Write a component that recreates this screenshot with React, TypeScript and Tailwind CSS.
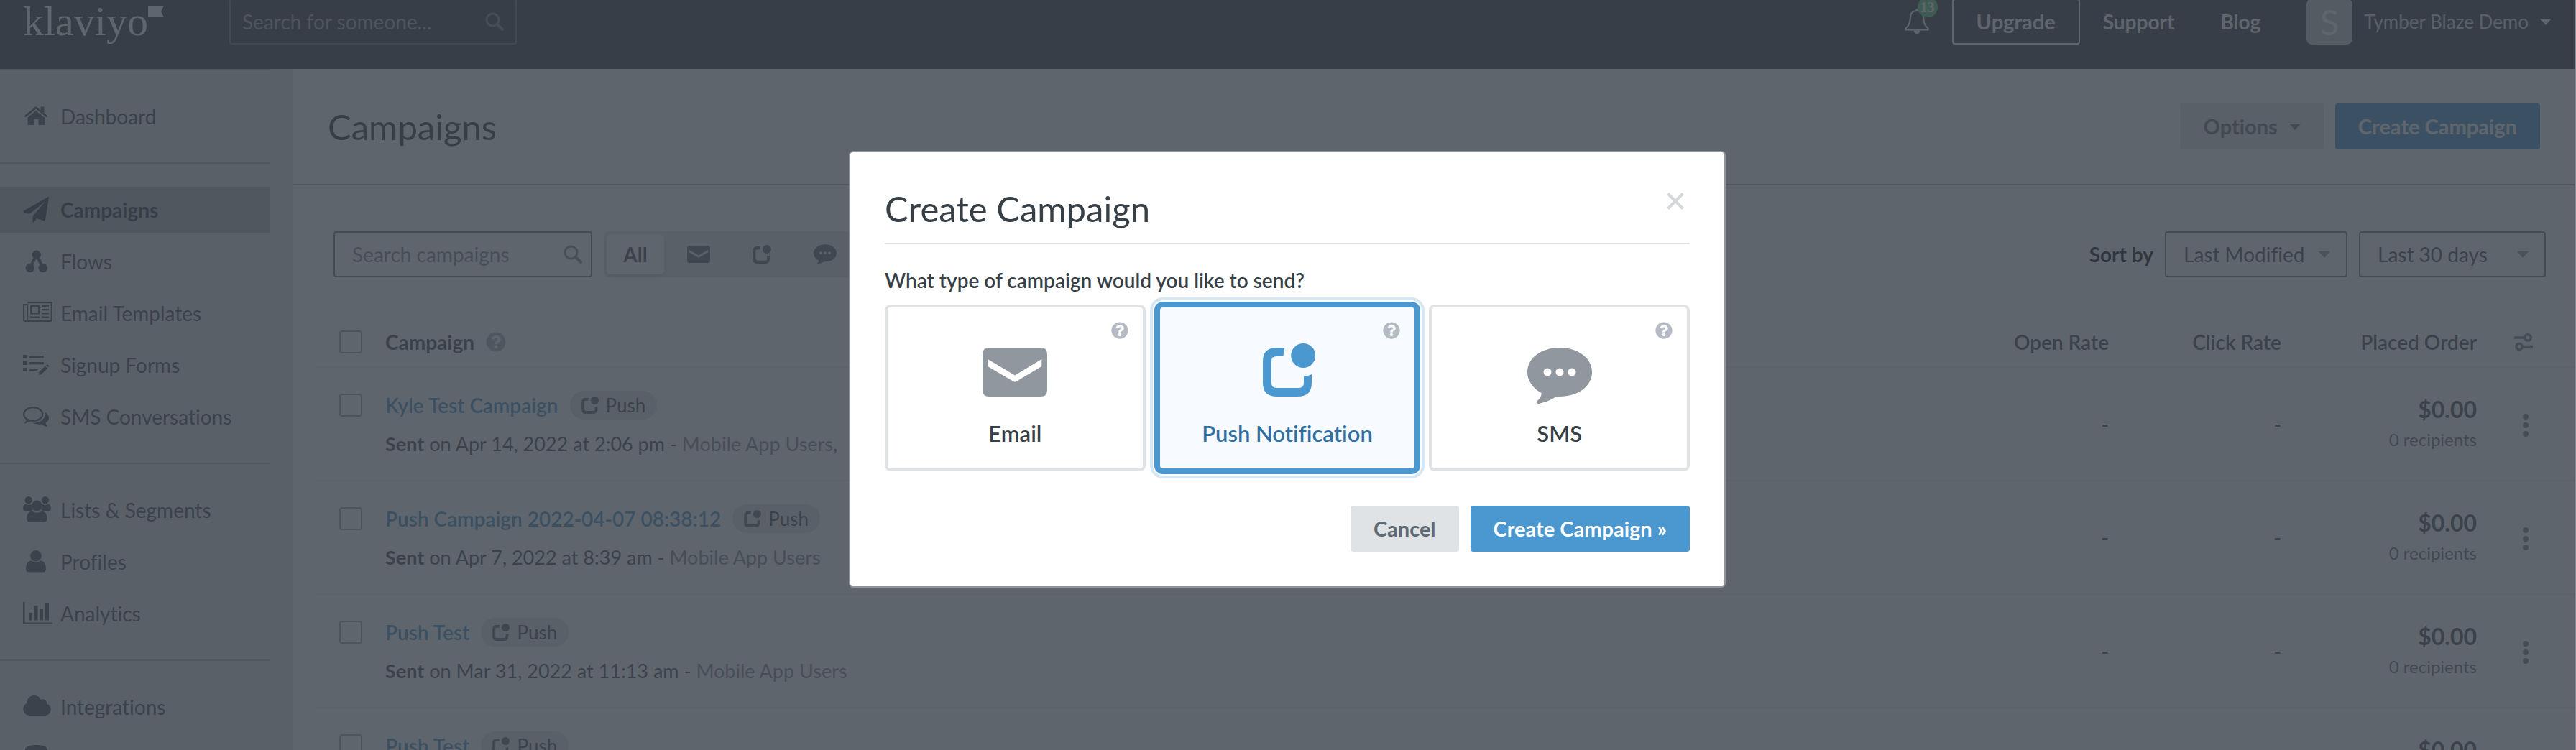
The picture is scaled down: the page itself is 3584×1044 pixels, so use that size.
import { useState } from "react"
import type { ReactNode } from "react"
import { FaQuestionCircle } from "react-icons/fa"
import clsx from "clsx"

/* Icons */

function NavIcon({ children }: { children: ReactNode }) {
  return (
    <svg viewBox="0 0 42 36" className="h-9 w-[42px] shrink-0 overflow-visible" fill="currentColor" aria-hidden="true">
      {children}
    </svg>
  )
}

const icons = {
  home: (
    <NavIcon>
      <g transform="translate(2 4)">
        <path d="M1.5 13.5 16 1.8l14.500 11.700" fill="none" stroke="currentColor" strokeWidth="2.800" strokeLinecap="round" strokeLinejoin="round" />
        <path d="M22.500 .5h5v9l-5-4z" />
        <path d="M16 6 28 15.500V25q0 1-1 1h-7.500v-8h-6v8H5.500q-1 0-1-1v-9.500z" />
      </g>
    </NavIcon>
  ),
  plane: (
    <NavIcon>
      <path d="M35 0 .6 19.800q-1 1 .4 1.800l7.500 2.700L31 6.500 13.500 27v8.200q.8 1.200 1.800 0L19 30l10.500 3.400q1.300.2 1.500-1L36 1q0-1.200-1-1z" />
    </NavIcon>
  ),
  flows: (
    <NavIcon>
      <g transform="translate(3.500 2.500)">
        <path d="M15.300 6.300 6.300 24.500M15.300 6.300l9 18.200" stroke="currentColor" strokeWidth="4.200" />
        <circle cx="15.300" cy="6.300" r="6.200" />
        <circle cx="6.300" cy="24.500" r="6.200" />
        <circle cx="24.300" cy="24.500" r="6.200" />
      </g>
    </NavIcon>
  ),
  news: (
    <NavIcon>
      <g transform="translate(0 2)" fill="none" stroke="currentColor" strokeWidth="2.200">
        <path d="M6.200 1.100h33.600v24q0 1.800-1.800 1.800H3q-1.900 0-1.900-1.800V4h5v21q0 1.500-1.800 1.900" />
        <path d="M11.200 6h11v10.500h-11zM10 21.500h13.200M26 6h10M26 11.200h10M26 16.400h10M26 21.500h10" />
      </g>
    </NavIcon>
  ),
  forms: (
    <NavIcon>
      <g transform="translate(0 4)">
        <path d="M0 0h5.500v5H0zM0 9h5.500v5H0zM0 18h5.500v5H0zM8.500 1H29v3.200H8.500zM8.500 10H29v3.200H8.500zM8.500 19H22l-3.200 3.200H8.500z" />
        <path d="m21.500 28 .8-4.300 8.600-8.200 3.300 3.300-8.500 8.200zM32 14.500l1.300-1.100q.8-.4 1.400.2l1.200 1.300q.5.700 0 1.400l-1 1.200z" />
      </g>
    </NavIcon>
  ),
  chat: (
    <NavIcon>
      <g transform="translate(0 4)">
        <path
          d="M14.200 1.200C7 1.200 1.200 5.400 1.200 10.600c0 3.300 2.100 5.900 5.300 7.500l-2.300 3.600 5.800-2.200c1.300.3 2.700.4 4.200.4 7.200 0 13-4.100 13-9.300s-5.800-9.400-13-9.400z"
          fill="none"
          stroke="currentColor"
          strokeWidth="2.300"
        />
        <path d="M30.800 8c3.200 1.900 5.200 4.500 5.200 7.600 0 2.900-1.600 5.300-4.300 6.800.3 2 1 3.300 1.800 4.300.4.800-.2 1.400-1 1.200-2.600-.6-5-1.900-6.500-3.300-4.900.6-9.800-.2-13-2 8.800.6 18.900-3.800 17.800-14.600z" />
      </g>
    </NavIcon>
  ),
  users: (
    <NavIcon>
      <g transform="translate(0 -1)">
        <circle cx="7.700" cy="5.200" r="5.200" />
        <circle cx="31" cy="5.200" r="5.200" />
        <path d="M4 10.500q4 2.500 7.800.3.200 5.500 2.200 8-2 .5-3.500 2H4.500Q0 20.500 0 16.500q.2-5 4-6zM35 10.500q-4 2.500-7.800.3-.2 5.500-2.200 8 2 .5 3.500 2h6Q39 20.500 39 16.500q-.2-5-4-6z" />
        <circle cx="19.400" cy="13" r="7.400" />
        <path d="M12.500 20.500q7 4.500 13.800 0Q33.500 21.500 33.500 31q0 5-5 5h-18q-5.200 0-5.200-5 0-9.500 7.200-10.500z" />
      </g>
    </NavIcon>
  ),
  user: (
    <NavIcon>
      <g transform="translate(4 2)">
        <circle cx="14" cy="7.800" r="7.800" />
        <path d="M7.200 14.200q6.800 4.500 13.600 0Q28 15.500 28 26q0 4.500-4.500 4.500h-19Q0 30.500 0 26q0-10.500 7.200-11.800z" />
      </g>
    </NavIcon>
  ),
  chart: (
    <NavIcon>
      <path d="M0 2h2.500v28.500H41V33H0zM8 17h5v10.500H8zM15.500 7h5v20.500h-5zM23 12h5v15.500h-5zM31 4h5v23.500h-5z" />
    </NavIcon>
  ),
  cloud: (
    <NavIcon>
      <path d="M9 30a9 9 0 0 1-3.500-17.200C5 6.500 10 2 15.500 2c4.500 0 8 2.500 9.500 6 4-2.500 9 1 8 5.800A8.300 8.300 0 0 1 31 30z" />
    </NavIcon>
  ),
  database: (
    <NavIcon>
      <path d="M3 5c0-8 31-8 31 0v6c0 8-31 8-31 0z" />
    </NavIcon>
  ),
}

function EmailIcon({ className }: { className?: string }) {
  return (
    <svg viewBox="0 0 90 68" className={className} aria-hidden="true">
      <path
        fill="currentColor"
        fillRule="evenodd"
        d="M9 0h72q9 0 9 9v50q0 9-9 9H9q-9 0-9-9V9q0-9 9-9zm-1.700 16v10L43 47q2 1 4 0l35.300-21V16L45 38.500z"
      />
    </svg>
  )
}

function PushIcon({ className }: { className?: string }) {
  return (
    <svg viewBox="0 0 73 74" className={className} fill="currentColor" aria-hidden="true">
      <path d="M30.600 6H20C6 6 0 12 0 26v28c0 14 6 20 20 20h28c14 0 20-6 20-20V43q-5 2.500-11 2.500V55q0 7-7 7H19q-7 0-7-7V24q0-6 7-6h9.500q0-6 2.100-12z" />
      <circle cx="56.200" cy="17" r="17" />
    </svg>
  )
}

function SmsIcon({ className }: { className?: string }) {
  return (
    <svg viewBox="0 0 90 78" className={className} aria-hidden="true">
      <path
        fill="currentColor"
        fillRule="evenodd"
        d="M45 0C20 0 0 14 0 34c0 12 8 23 19.600 29C19.600 68 17 71 13.500 74.500 12 77 14 78.500 17 77.700 27 75.500 34 72 40 68h5c25 0 45-14 45-34S70 0 45 0zM28 28.500a5.500 5.500 0 1 1 0 11 5.500 5.500 0 0 1 0-11zm17 0a5.500 5.500 0 1 1 0 11 5.500 5.500 0 0 1 0-11zm17 0a5.500 5.500 0 1 1 0 11 5.500 5.500 0 0 1 0-11z"
      />
    </svg>
  )
}

function SearchIcon() {
  return (
    <svg viewBox="0 0 26 26" className="size-[26px] shrink-0" fill="none" stroke="currentColor" aria-hidden="true">
      <circle cx="10.500" cy="10.500" r="8.500" strokeWidth="3.200" />
      <path d="m17 17 7 7" strokeWidth="4" strokeLinecap="round" />
    </svg>
  )
}

function BellIcon() {
  return (
    <svg viewBox="0 0 34 36" className="h-9 w-[34px]" fill="none" stroke="currentColor" strokeWidth="2.200" aria-hidden="true">
      <path d="M17 3c-6 0-9 3.500-9 9-.3 7-2 12-6.500 15.500v1.800h31v-1.800C28 24 26.300 19 26 12c0-5.500-3-9-9-9z" />
      <path d="M12.500 30.500q.5 4.500 4.500 4.500t4.500-4.500z" fill="currentColor" stroke="none" />
      <circle cx="17" cy="2" r="1.800" fill="currentColor" stroke="none" />
    </svg>
  )
}

function Caret({ className }: { className?: string }) {
  return (
    <svg viewBox="0 0 16 9" className={clsx("h-[9px] w-4 shrink-0", className)} fill="currentColor" aria-hidden="true">
      <path d="M0 0h16L8 9z" />
    </svg>
  )
}

const navSections = [
  [{ label: "Dashboard", icon: icons.home }],
  [
    { label: "Campaigns", icon: icons.plane, active: true },
    { label: "Flows", icon: icons.flows },
    { label: "Email Templates", icon: icons.news },
    { label: "Signup Forms", icon: icons.forms },
    { label: "SMS Conversations", icon: icons.chat },
  ],
  [
    { label: "Lists & Segments", icon: icons.users },
    { label: "Profiles", icon: icons.user },
    { label: "Analytics", icon: icons.chart },
  ],
  [
    { label: "Integrations", icon: icons.cloud },
    { label: "", icon: icons.database },
  ],
]

const campaigns = [
  { name: "Kyle Test Campaign", sent: "Apr 14, 2022 at 2:06 pm", list: "Mobile App Users", more: true },
  { name: "Push Campaign 2022-04-07 08:38:12", sent: "Apr 7, 2022 at 8:39 am", list: "Mobile App Users" },
  { name: "Push Test", sent: "Mar 31, 2022 at 11:13 am", list: "Mobile App Users" },
  { name: "Push Test", sent: "", list: "" },
]

const campaignTypes = [
  { value: "email", label: "Email", icon: <EmailIcon className="h-[68px] w-[90px]" /> },
  { value: "push", label: "Push Notification", icon: <PushIcon className="-mt-1.5 ml-1.5 h-[74px] w-[73px]" /> },
  { value: "sms", label: "SMS", icon: <SmsIcon className="h-[78px] w-[90px]" /> },
]

function Header() {
  return (
    <header className="-mt-8 flex h-32 shrink-0 items-center bg-[#373f47] px-8 pb-1 text-white">
      <a href="#" className="flex w-[287px] items-center">
        <span className="font-['Liberation_Serif',serif] text-[58px] leading-16">klaviyo</span>
        <svg viewBox="0 0 22 16" className="mb-7 h-4 w-[22px]" fill="currentColor" aria-hidden="true">
          <path d="M0 0h22l-4 8 4 8H0z" />
        </svg>
      </a>
      <div className="flex h-16 w-[400px] items-center rounded border-2 border-[#6b727a] px-4">
        <input
          type="text"
          aria-label="Search for someone"
          placeholder="Search for someone..."
          className="min-w-0 flex-1 bg-transparent outline-none placeholder:text-[#a3a8ae]"
        />
        <span className="text-[#80868d]">
          <SearchIcon />
        </span>
      </div>

      <div className="ml-auto flex items-center">
        <button className="relative mr-8" aria-label="Notifications">
          <BellIcon />
          <span className="absolute -right-3 -top-4 flex size-7 items-center justify-center rounded-full bg-[#5fd087] font-['Liberation_Serif',serif] text-[20px] font-bold">
            13
          </span>
        </button>
        <button className="mr-8 h-16 rounded border-2 border-white px-8 text-[29px] font-bold">Upgrade</button>
        <a href="#" className="mr-16 font-bold">Support</a>
        <a href="#" className="mr-16 font-bold">Blog</a>
        <button className="flex items-center gap-4 text-[26px] text-[#dfe3e6]">
          <span className="flex size-16 items-center justify-center rounded-lg bg-[#c6cad0] text-[49px] text-white">
            S
          </span>
          Tymber Blaze Demo
          <Caret className="text-white" />
        </button>
      </div>
    </header>
  )
}

function Sidebar() {
  return (
    <aside className="w-[408px] shrink-0 bg-[#e3e5e9]">
      <nav className="w-[376px]">
        {navSections.map((section, i) => (
          <ul key={i} className="space-y-2 border-t-2 border-[#b6bbc2] py-8">
            {section.map((item, j) => (
              <li key={j}>
                <a
                  href="#"
                  className={clsx(
                    "flex h-16 items-center gap-2.5 pl-8",
                    item.active ? "bg-[#afb8bf] font-bold text-[#373f47]" : "text-[#4c535b]"
                  )}
                >
                  {item.icon}
                  {item.label}
                </a>
              </li>
            ))}
          </ul>
        ))}
      </nav>
    </aside>
  )
}

function Toolbar() {
  return (
    <div className="flex items-center pl-14 pr-10 pt-16">
      <div className="flex h-16 w-[360px] items-center rounded border-2 border-[#7d848c] pl-6 pr-3">
        <input
          type="text"
          aria-label="Search campaigns"
          placeholder="Search campaigns"
          className="min-w-0 flex-1 bg-transparent outline-none placeholder:text-[#868d94]"
        />
        <span className="text-[#8b929a]">
          <SearchIcon />
        </span>
      </div>

      <div className="ml-4 flex h-16 items-center gap-2 rounded-lg bg-[#dfe3e6] p-1 text-[#606a72]">
        <button className="h-14 w-20 rounded-md bg-white font-bold text-[#4c535b] shadow-md">All</button>
        <button className="flex w-20 justify-center" aria-label="Email">
          <EmailIcon className="h-6 w-8" />
        </button>
        <button className="flex w-20 justify-center" aria-label="Push">
          <PushIcon className="size-[26px]" />
        </button>
        <button className="flex w-20 justify-center" aria-label="SMS">
          <SmsIcon className="h-7 w-8" />
        </button>
      </div>

      <div className="ml-auto flex items-center gap-4">
        <label htmlFor="sort" className="font-bold text-[#101820]">Sort by</label>
        <div className="relative">
          <select id="sort" className="h-16 w-[254px] appearance-none rounded border-2 border-[#7d848c] pl-6 text-[#4c535b]">
            <option>Last Modified</option>
          </select>
          <Caret className="pointer-events-none absolute right-6 top-7 text-[#9aa0a7]" />
        </div>
        <div className="relative">
          <select aria-label="Period" className="h-16 w-[260px] appearance-none rounded border-2 border-[#7d848c] pl-6 text-[#4c535b]">
            <option>Last 30 days</option>
          </select>
          <Caret className="pointer-events-none absolute right-6 top-7 text-[#9aa0a7]" />
        </div>
      </div>
    </div>
  )
}

function CheckBox({ label }: { label: string }) {
  return (
    <input
      type="checkbox"
      aria-label={label}
      className="block size-8 appearance-none rounded border-2 border-[#a3a9b1]"
    />
  )
}

function CampaignTable() {
  return (
    <table className="ml-8 mt-14 w-[calc(100%-32px)] table-fixed border-separate border-spacing-0 text-right">
      <thead>
        <tr className="h-[70px] text-[#4c535b] *:border-b-2 *:border-[#ebeef0]">
          <th className="w-24 pl-8">
            <CheckBox label="Select all" />
          </th>
          <th className="text-left font-bold">
            <span className="flex items-center gap-4">
              Campaign
              <FaQuestionCircle className="size-7 text-[#b0b6bd]" />
            </span>
          </th>
          <th className="w-60 font-semibold">Open Rate</th>
          <th className="w-60 font-semibold">Click Rate</th>
          <th className="w-[272px] font-semibold">Placed Order</th>
          <th className="w-[136px] pl-[52px]">
            <button className="block text-[#7d848c]" aria-label="Columns">
              <svg viewBox="0 0 26 26" className="size-[26px]" fill="none" stroke="currentColor" strokeWidth="3.500">
                <path d="M1 7h13M12 19.500h13" strokeLinecap="round" />
                <circle cx="19" cy="7" r="4.200" />
                <circle cx="7" cy="19.500" r="4.200" />
              </svg>
            </button>
          </th>
        </tr>
      </thead>
      <tbody>
        {campaigns.map((c, i) => (
          <tr key={i} className="h-[158px] text-[#4c535b] *:border-b-2 *:border-[#ebeef0]">
            <td className="pl-8 pt-9 align-top">
              <CheckBox label={c.name} />
            </td>
            <td className="whitespace-nowrap pt-8 text-left align-top">
              <div className="flex h-10 items-center gap-4">
                <a href="#" className="font-semibold text-[#4b97cf]">{c.name}</a>
                <span className="flex h-10 items-center gap-2.5 rounded-full bg-[#dfe3e6] px-4 text-[26px]">
                  <PushIcon className="size-6 text-[#606a72]" />
                  Push
                </span>
              </div>
              <div className="mt-3.5 h-10 text-[27px] leading-10">
                {c.sent && (
                  <>
                    <span className="font-bold">Sent</span> <span className="font-medium">on</span> {c.sent}
                    {" - "}
                    <span className="text-[#868d94]">{c.list}</span>
                    {c.more && ","}
                  </>
                )}
              </div>
            </td>
            <td className="font-bold">-</td>
            <td className="font-bold">-</td>
            <td>
              <div className="text-[32px] font-bold leading-11">$0.00</div>
              <div className="text-2xl leading-10 text-[#6b727a]">0 recipients</div>
            </td>
            <td className="pl-[52px] pt-1">
              <button className="flex h-10 w-8 flex-col items-center justify-center gap-1" aria-label="More">
                <span className="size-2 rounded-full bg-[#7d848c]" />
                <span className="size-2 rounded-full bg-[#7d848c]" />
                <span className="size-2 rounded-full bg-[#7d848c]" />
              </button>
            </td>
          </tr>
        ))}
      </tbody>
    </table>
  )
}

function CreateCampaignModal() {
  const [type, setType] = useState("push")

  return (
    <div className="absolute inset-0 flex items-start justify-center bg-[#373f47]/80 pt-[210px]">
      <div role="dialog" aria-labelledby="modal-title" className="w-[1220px] rounded-md border-2 border-[#8f949a] bg-white p-12">
        <div className="flex h-20 items-start justify-between border-b-2 border-[#dfe1e3]">
          <h2 id="modal-title" className="text-[49px] leading-15">Create Campaign</h2>
          <button className="mr-2 pt-2 text-[#d5d8da]" aria-label="Close">
            <svg viewBox="0 0 24 24" className="size-6" stroke="currentColor" strokeWidth="4">
              <path d="m1.500 1.500 21 21m0-21-21 21" />
            </svg>
          </button>
        </div>

        <form onSubmit={(e) => e.preventDefault()}>
          <fieldset className="pt-7">
            <legend className="float-left font-semibold leading-11">What type of campaign would you like to send?</legend>
            <div className="clear-both grid grid-cols-3 gap-4 pt-3">
              {campaignTypes.map((t) => {
                const selected = t.value === type
                return (
                  <label
                    key={t.value}
                    className={clsx(
                      "relative flex h-[232px] cursor-pointer flex-col items-center rounded-lg border-4 pt-14 text-[31px] font-semibold",
                      selected
                        ? "border-[#4b97cf] bg-[#f7fbff] text-[#2f6fa1] shadow-[0_0_0_4px_#4b97cf,0_0_0_6px_#fff,0_0_0_10px_#d4e7f4]"
                        : "border-[#dfe3e6]"
                    )}
                  >
                    <input
                      type="radio"
                      name="type"
                      value={t.value}
                      checked={selected}
                      onChange={() => setType(t.value)}
                      className="sr-only"
                    />
                    <span className={clsx("h-[99px]", selected ? "text-[#4b97cf]" : "text-[#91979e]")}>{t.icon}</span>
                    <span className="leading-10">{t.label}</span>
                    <FaQuestionCircle className="absolute right-5 top-5 size-6 text-[#b4bbc4]" />
                  </label>
                )
              })}
            </div>
          </fieldset>

          <div className="mt-12 flex justify-end gap-4 text-[29px] font-bold">
            <button type="button" className="h-16 rounded bg-[#dfe3e6] px-8 text-[#606a72]">Cancel</button>
            <button type="submit" className="h-16 rounded bg-[#4b97cf] px-8 text-white">Create Campaign »</button>
          </div>
        </form>
      </div>
    </div>
  )
}

export default function App() {
  return (
    <div className="relative flex h-screen flex-col overflow-hidden border-r-2 border-[#8b8f94] bg-white font-[Lato,sans-serif] text-[28px] leading-10 text-[#373f47] [font-variant-ligatures:none]">
      <Header />
      <div className="flex min-h-0 flex-1">
        <Sidebar />
        <main className="min-w-0 flex-1">
          <div className="flex items-center justify-between border-b-2 border-[#afb5bc] px-12 py-12">
            <h1 className="text-[49px] leading-16">Campaigns</h1>
            <div className="flex gap-4 text-[29px] font-bold">
              <button className="flex h-16 items-center gap-4 rounded bg-[#dfe3e6] px-8 text-[#6b727a]">
                Options
                <Caret />
              </button>
              <button className="h-16 rounded bg-[#4b97cf] px-8 text-white">Create Campaign</button>
            </div>
          </div>
          <Toolbar />
          <CampaignTable />
        </main>
      </div>
      <CreateCampaignModal />
    </div>
  )
}
